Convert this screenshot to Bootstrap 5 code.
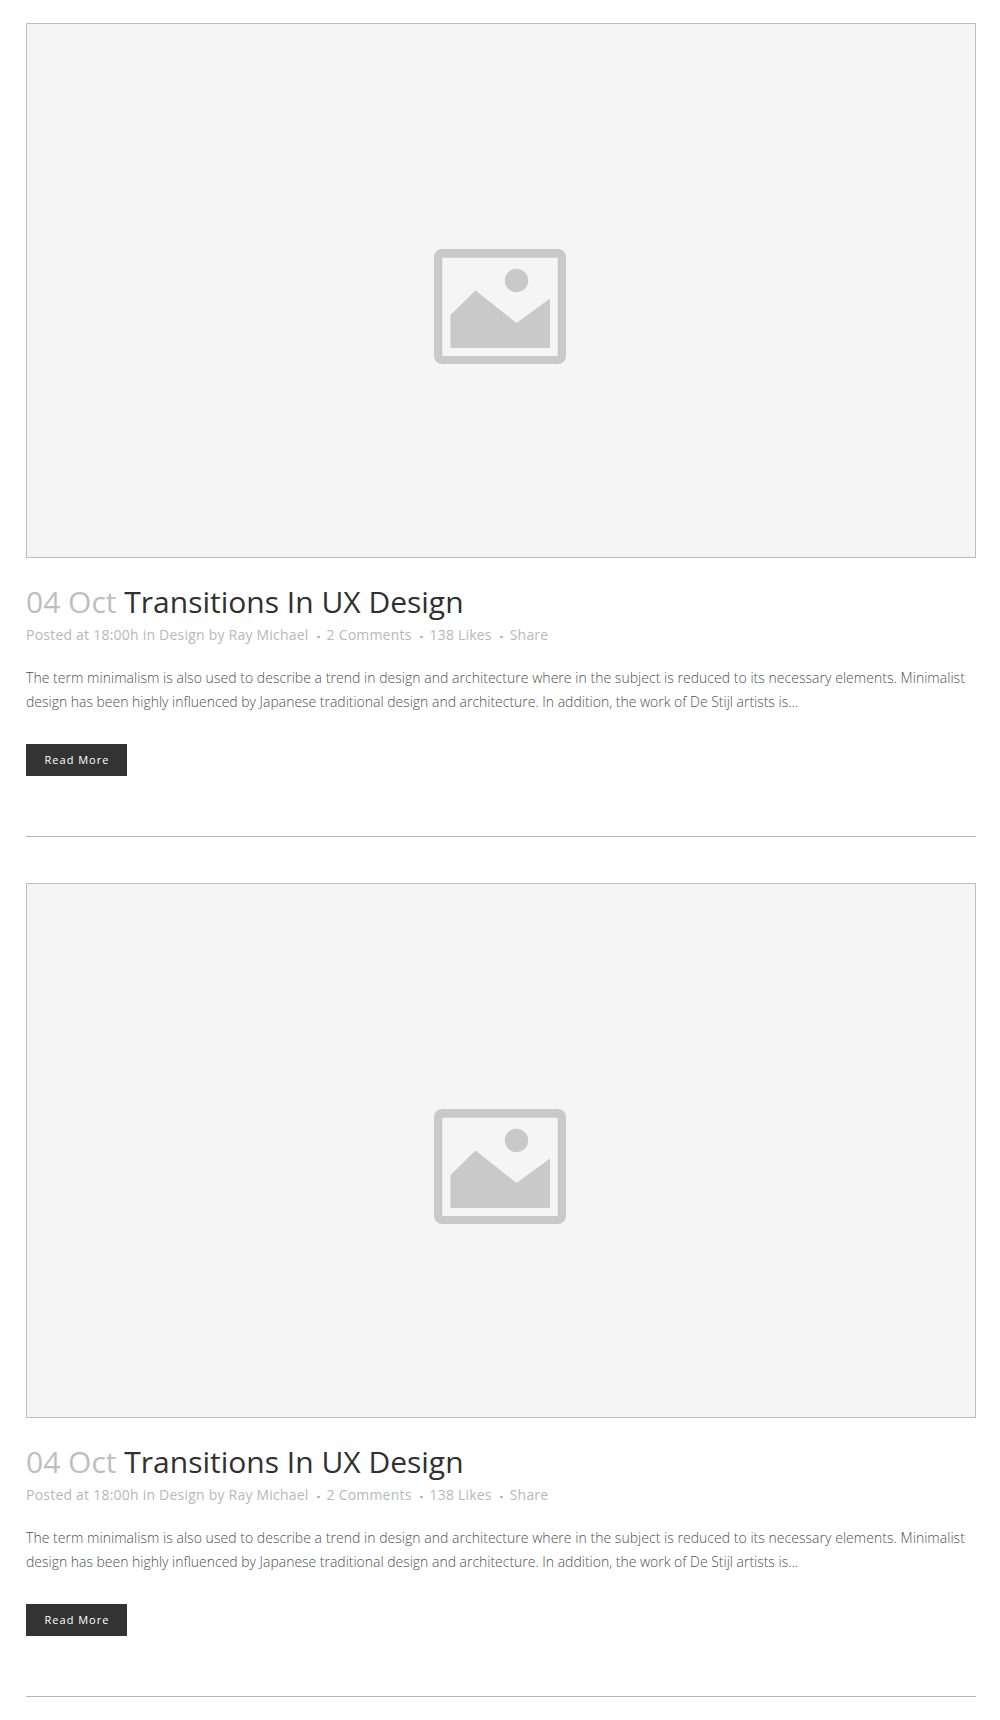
<!DOCTYPE html>
<html lang="en">
<head>
<meta charset="utf-8">
<meta name="viewport" content="width=device-width, initial-scale=1">
<title>Blog</title>
<link href="https://cdn.jsdelivr.net/npm/bootstrap@5.3.0/dist/css/bootstrap.min.css" rel="stylesheet">
<style>
body { font-family: "Open Sans", sans-serif; background: #fff; }
.blog-list { padding: 23px 24px 0 26px; }
.post-item { padding-bottom: 60px; margin-bottom: 46px; border-bottom: 1px solid #b7b7b7; }
.post-item:last-child { margin-bottom: 0; }
.post-image { height: 535px; background: #f5f5f5; border: 1px solid #bdbdbd; padding-right: 2px; }
.post-image svg { margin-top: 32px; }
.post-title { margin: 26px 0 3px; font-size: 30px; line-height: 36px; font-weight: 400; color: #303030; }
.post-title a { color: inherit; }
.post-date { color: #bebebe; }
.post-meta { font-size: 14px; line-height: 24px; letter-spacing: .2px; color: #b8b8b8; }
.post-meta span:first-child { letter-spacing: .22px; }
.meta-dot { width: 3px; height: 2px; background: #b8b8b8; margin: 3px 7px 0 8px; }
.post-text { margin: 19px 0 30px; font-size: 14px; line-height: 24px; font-weight: 300; color: #505050; }
.text-lead-line { letter-spacing: .034px; }
.text-end-line { letter-spacing: -.018px; }
.btn-read { width: 101px; height: 32px; padding: 0 0 0 1px; line-height: 32px; font-size: 11px; font-weight: 500; letter-spacing: 1px; color: #fff; background: #333; }
.btn-read:hover { color: #fff; background: #555; }
</style>
</head>
<body>
<main class="blog-list">
  <article class="post-item">
    <div class="post-image d-flex justify-content-center align-items-center">
      <svg width="132" height="115" viewBox="0 0 132 115" fill="#c9c9c9" aria-hidden="true"><path fill-rule="evenodd" d="M8 0H124a8 8 0 0 1 8 8V107a8 8 0 0 1-8 8H8a8 8 0 0 1-8-8V8a8 8 0 0 1 8-8ZM8.300 8.700V107H123.700V8.700Z"/><path d="M16.500 66 41.500 41.500 82.500 74 116 49.500V99H16.500Z"/><circle cx="82.500" cy="31.500" r="11.700"/></svg>
    </div>
    <h2 class="post-title"><span class="post-date">04 Oct</span> <a href="#" class="text-decoration-none">Transitions In UX Design</a></h2>
    <div class="post-meta d-flex align-items-center"><span>Posted at 18:00h in Design by Ray Michael</span><i class="meta-dot"></i><span>2 Comments</span><i class="meta-dot"></i><span>138 Likes</span><i class="meta-dot"></i><span>Share</span></div>
    <p class="post-text"><span class="text-nowrap text-lead-line">The term minimalism is also used to describe a trend in design and architecture where in the subject is reduced to its necessary elements. Minimalist</span><br><span class="text-nowrap text-end-line">design has been highly influenced by Japanese traditional design and architecture. In addition, the work of De Stijl artists is...</span></p>
    <a href="#" class="btn btn-read d-block border-0 rounded-0">Read More</a>
  </article>
  <article class="post-item">
    <div class="post-image d-flex justify-content-center align-items-center">
      <svg width="132" height="115" viewBox="0 0 132 115" fill="#c9c9c9" aria-hidden="true"><path fill-rule="evenodd" d="M8 0H124a8 8 0 0 1 8 8V107a8 8 0 0 1-8 8H8a8 8 0 0 1-8-8V8a8 8 0 0 1 8-8ZM8.300 8.700V107H123.700V8.700Z"/><path d="M16.500 66 41.500 41.500 82.500 74 116 49.500V99H16.500Z"/><circle cx="82.500" cy="31.500" r="11.700"/></svg>
    </div>
    <h2 class="post-title"><span class="post-date">04 Oct</span> <a href="#" class="text-decoration-none">Transitions In UX Design</a></h2>
    <div class="post-meta d-flex align-items-center"><span>Posted at 18:00h in Design by Ray Michael</span><i class="meta-dot"></i><span>2 Comments</span><i class="meta-dot"></i><span>138 Likes</span><i class="meta-dot"></i><span>Share</span></div>
    <p class="post-text"><span class="text-nowrap text-lead-line">The term minimalism is also used to describe a trend in design and architecture where in the subject is reduced to its necessary elements. Minimalist</span><br><span class="text-nowrap text-end-line">design has been highly influenced by Japanese traditional design and architecture. In addition, the work of De Stijl artists is...</span></p>
    <a href="#" class="btn btn-read d-block border-0 rounded-0">Read More</a>
  </article>
</main>
<script src="https://cdn.jsdelivr.net/npm/bootstrap@5.3.0/dist/js/bootstrap.bundle.min.js"></script>
</body>
</html>
